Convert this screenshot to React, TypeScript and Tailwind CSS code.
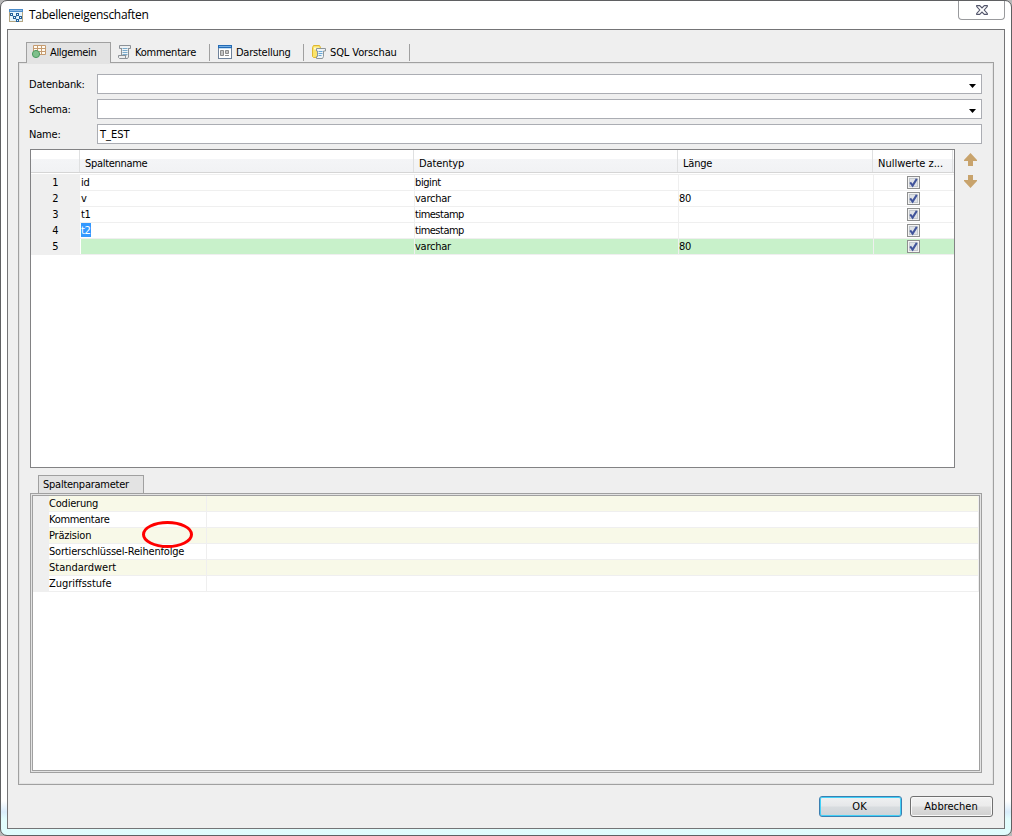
import React from "react";

function Check() {
  return (
    <svg width="13" height="13" viewBox="0 0 13 13" className="block">
      <rect x="0.5" y="0.5" width="12" height="12" fill="#f4f4f4" stroke="#8e8f8f" />
      <rect x="2.5" y="2.5" width="8" height="8" fill="#dfe2e6" stroke="#c3c8ce" />
      <path d="M3.2 6.3 5.6 9.6 9.8 2.9" fill="none" stroke="#41549b" strokeWidth="2" />
    </svg>
  );
}

function AppIcon() {
  return (
    <svg width="14" height="13" viewBox="0 0 14 13" className="block">
      <rect x="0.5" y="0.5" width="13" height="12" fill="#e6f5fb" stroke="#b3a583" />
      <rect width="14" height="3" fill="#4a8ac8" />
      <path d="M1 1.5h12" stroke="#8fbce6" />
      <path d="M3 5.5 5.5 9.5 8.5 6M6 9.5 9 11 12 8.5" stroke="#7da9cf" fill="none" />
      <path d="M1 4h3v3H1zM7 4h3v3H7zM4 7h3v3H4zM7 10h3v3H7zM10 7h3v3h-3z" fill="#235f98" />
      <path d="M2 5h1v1H2zM8 5h1v1H8zM5 8h1v1H5zM8 11h1v1H8zM11 8h1v1h-1z" fill="#e6f7ff" />
    </svg>
  );
}

function GridIcon() {
  return (
    <svg width="14" height="14" viewBox="0 0 14 14" className="block">
      <path d="M1.5.5h12v9h-12zM5.5.5v9M9.5.5v9M1.5 3.5h12M1.5 6.5h12" fill="#fffaf0" stroke="#c59b70" />
      <circle cx="4" cy="9" r="3.6" fill="#7fc08b" stroke="#4b9b62" />
    </svg>
  );
}

function ScrollIcon() {
  return (
    <svg width="14" height="14" viewBox="0 0 14 14" className="block">
      <path d="M3.5 3.5h-2v-3h11v3h-2v7h-7z" fill="#eceeef" stroke="#8c9196" />
      <path d="M3.5 3v8M10.5 3v9l-1 1.5h-8l-1-1v-2h7v3" fill="#eceeef" stroke="#8c9196" />
      <path d="M4 2h6v8H4z" fill="#eef3f6" />
      <path d="M4.5 3.5h5M4.5 5.5h5M4.5 7.5h5M4.5 9.5h5" stroke="#79aacb" />
    </svg>
  );
}

function WindowIcon() {
  return (
    <svg width="14" height="14" viewBox="0 0 14 14" className="block">
      <rect x="0.5" y="0.5" width="13" height="13" fill="#fff" stroke="#70839b" />
      <rect width="14" height="3" fill="#246bb5" />
      <path d="M1 1.5h12" stroke="#76b0e5" />
      <path d="M1 3.5h12" stroke="#c5def2" />
      <path d="M2.5 5.5h3v5h-3zM7.5 5.5h3v3h-3z" fill="#c5c5c5" stroke="#8b8b8b" />
      <path d="M7 10.5h4" stroke="#8b8b8b" />
    </svg>
  );
}

function SqlIcon() {
  return (
    <svg width="14" height="14" viewBox="0 0 14 14" className="block">
      <path d="M.5 2.5 1.5.5h6l1 2v10h-7l-1-1z" fill="#fae36b" stroke="#dfb72f" />
      <path d="M2 3.5h5" stroke="#fffbd0" strokeWidth="2" />
      <path d="M4.5 3.5h9v2.5h-2v5.5l-1 2h-6v-2h1v-5.5h-1z" fill="#edf3f7" stroke="#8e9699" />
      <path d="M6.5 6.5h4M6.5 8.5h4M6.5 10.5h3" stroke="#69a7d5" />
    </svg>
  );
}

const tabs = [
  { label: "Kommentare", icon: <ScrollIcon />, box: "w-[99px] pl-[7px]", text: "ml-[3px] tracking-[-0.25px]" },
  { label: "Darstellung", icon: <WindowIcon />, box: "w-[94px] pl-[8px]", text: "ml-[4px] tracking-[-0.25px]" },
  { label: "SQL Vorschau", icon: <SqlIcon />, box: "w-[106px] pl-[8px]", text: "ml-[4px] tracking-[-0.1px]" },
];

const columns = [
  { name: "id", type: "bigint", length: "", spacing: "tracking-[-0.4px]" },
  { name: "v", type: "varchar", length: "80", spacing: "tracking-[-0.25px]" },
  { name: "t1", type: "timestamp", length: "", spacing: "tracking-[-0.5px]" },
  { name: "t2", type: "timestamp", length: "", spacing: "tracking-[-0.5px]" },
  { name: "", type: "varchar", length: "80", spacing: "tracking-[-0.25px]" },
];

const params = [
  { label: "Codierung", spacing: "tracking-[-0.2px]" },
  { label: "Kommentare", spacing: "tracking-[-0.3px]" },
  { label: "Präzision", spacing: "tracking-[-0.2px]" },
  { label: "Sortierschlüssel-Reihenfolge", spacing: "tracking-[-0.18px]" },
  { label: "Standardwert", spacing: "tracking-normal" },
  { label: "Zugriffsstufe", spacing: "tracking-[-0.05px]" },
];

function Field({ label, value, combo }: { label: string; value?: string; combo?: boolean }) {
  return (
    <div className="flex h-[20px]">
      <label className="w-[68px] pt-[3px] tracking-[-0.2px]">{label}</label>
      <div className="flex flex-1 justify-between border border-[#abadb3] bg-white pl-[2px]">
        <span className="pt-[2px]">{value}</span>
        {combo && (
          <svg width="7" height="4" viewBox="0 0 7 4" className="mt-[9px] mr-[5px]">
            <path d="M0 0h7L3.5 4z" fill="#000" />
          </svg>
        )}
      </div>
    </div>
  );
}

function HeadCell({ text, className }: { text: string; className: string }) {
  return (
    <div className={`h-full border-r border-[#dfe0e1] pt-[6px] ${className}`}>{text}</div>
  );
}

export default function App() {
  return (
    <div className="h-[836px] w-[1012px] bg-[#b8b8b8] font-['DejaVu_Sans_Condensed','Noto_Sans',sans-serif] text-[11px] leading-[16px] whitespace-nowrap text-black">
      <div className="flex h-full flex-col rounded-[7px] border border-[#5f6062] bg-[linear-gradient(to_bottom,#fff_0,#fff_800px,#d9ecfb_811px,#e2fdfd_818px,#dffcfc_100%)] px-[6px] pb-[6px]">
        <header className="flex h-[28px] items-start justify-between">
          <div className="flex pl-[2px]">
            <div className="pt-[8px]"><AppIcon /></div>
            <h1 className="ml-[6px] pt-[6px] font-['Open_Sans','Noto_Sans',sans-serif] text-[12px] tracking-[-0.3px]">Tabelleneigenschaften</h1>
          </div>
          <button className="flex h-[19px] w-[47px] justify-center rounded-b-[4px] border border-t-0 border-[#999a9d] bg-white pt-[4px]">
            <svg width="12" height="10" viewBox="0 0 12 10">
              <path d="M.7.6h3L6 3 8.3.6h3v1L8.2 5l3.1 3.4v1h-3L6 7 3.7 9.4h-3v-1L3.8 5 .7 1.6z" fill="#fff" stroke="#53566b" strokeWidth="1.1" />
            </svg>
          </button>
        </header>

        <main className="flex flex-1 flex-col border border-[#747476] bg-[#efefef] px-[10px] pt-[12px] pb-[11px]">
          <nav className="z-10 flex h-[21px] pl-[8px]">
            <div className="flex h-[21px] w-[85px] border border-b-0 border-[#a0a0a0] bg-[#e3e3e3] pl-[5px]">
              <div className="pt-[2px]"><GridIcon /></div>
              <span className="ml-[4px] pt-[2px] tracking-[-0.33px]">Allgemein</span>
            </div>
            {tabs.map((t) => (
              <div key={t.label} className={`mt-[2px] flex h-[17px] border-r border-[#a0a0a0] ${t.box}`}>
                <div className="pt-[1px]">{t.icon}</div>
                <span className={`pt-[1px] ${t.text}`}>{t.label}</span>
              </div>
            ))}
          </nav>

          <section className="-mt-px h-[723px] border border-[#a0a0a0] px-[11px] pt-[11px] shadow-[inset_0_0_0_1px_#e3e3e3]">
            <div className="-ml-px flex flex-col gap-[5px]">
              <Field label="Datenbank:" combo />
              <Field label="Schema:" combo />
              <Field label="Name:" value="T_EST" />
            </div>

            <div className="mt-[5px] flex">
              <div className="h-[319px] w-[925px] border border-[#828284] bg-white">
                <div className="flex h-[23px] border-b border-[#d5d5d5] bg-[linear-gradient(#fff_0,#fff_9px,#f4f5f7_9px,#f1f2f4_100%)]">
                  <HeadCell text="" className="w-[49px]" />
                  <HeadCell text="Spaltenname" className="w-[334px] pl-[5px] tracking-[-0.3px]" />
                  <HeadCell text="Datentyp" className="w-[264px] pl-[5px] tracking-[-0.1px]" />
                  <HeadCell text="Länge" className="w-[195px] pl-[5px] tracking-[-0.2px]" />
                  <HeadCell text="Nullwerte z..." className="w-[80px] pl-[5px]" />
                </div>
                <div className="mt-[1px] border-t border-[#efefef]">
                  {columns.map((c, i) => (
                    <div key={i} className={`flex h-[16px] w-[923px] border-b border-[#efefef] leading-[15px] ${i === 4 ? "bg-[#c8f1ca]" : "bg-white"}`}>
                      <div className="w-[50px] border-r border-white bg-[#efefef] text-center">{i + 1}</div>
                      <div className="w-[334px] border-r border-[#efefef] tracking-[-0.3px]">
                        <span className={i === 3 ? "inline-block h-[14px] w-[10px] bg-[#3399ff] text-white" : ""}>{c.name}</span>
                      </div>
                      <div className={`w-[264px] border-r border-[#efefef] ${c.spacing}`}>{c.type}</div>
                      <div className="w-[195px] border-r border-[#efefef] tracking-[-0.3px]">{c.length}</div>
                      <div className="flex-1 pt-[1px] pl-[33px]"><Check /></div>
                    </div>
                  ))}
                </div>
              </div>
              <div className="flex flex-col gap-[9px] pt-[4px] pl-[9px]">
                <svg width="13" height="13" viewBox="0 0 13 13"><path d="M6.5 0 13 7v1H9v5H4V8H0V7z" fill="#c8a36c" /></svg>
                <svg width="13" height="13" viewBox="0 0 13 13"><path d="M4 0h5v5h4v1l-6.5 7L0 6V5h4z" fill="#c8a36c" /></svg>
              </div>
            </div>

            <div className="mt-[7px] ml-[8px] h-[19px] w-[106px] border border-b-0 border-[#a0a0a0] bg-[#e3e3e3] pt-[1px] pl-[4px] tracking-[-0.25px]">Spaltenparameter</div>
            <div className="-mt-px h-[280px] w-[952px] border border-[#a0a0a0] bg-[#e3e3e3] p-[1px]">
              <div className="relative h-full border border-[#a0a0a0] bg-white">
                {params.map((p, i) => (
                  <div key={p.label} className="flex h-[16px] leading-[15px]">
                    <div className="w-[16px] bg-[#efefef]" />
                    <div className={`w-[158px] border-r border-b border-[#efefef] ${p.spacing} ${i % 2 ? "bg-white" : "bg-[#f8f9e8]"}`}>{p.label}</div>
                    <div className={`flex-1 border-r border-b border-[#efefef] ${i % 2 ? "bg-white" : "bg-[#f8f9e8]"}`} />
                  </div>
                ))}
                <svg className="absolute top-[24px] left-[108px]" width="54" height="30" viewBox="0 0 54 30">
                  <ellipse cx="26.5" cy="14.5" rx="24" ry="12" fill="none" stroke="#ff0000" strokeWidth="3" />
                </svg>
              </div>
            </div>
          </section>

          <footer className="mt-[11px] flex justify-end gap-[8px] pr-px">
            <button className="h-[21px] w-[83px] rounded-[3px] border border-[#3c7fb1] bg-[linear-gradient(#f0f1f2_0,#e5e7e9_48%,#d8dcdf_52%,#cdd3d8_100%)] pr-[2px] shadow-[inset_0_0_0_1px_#42d0f7]">OK</button>
            <button className="h-[21px] w-[83px] rounded-[3px] border border-[#707070] bg-[linear-gradient(#f2f2f2_0,#ebebeb_48%,#dddddd_52%,#cfcfcf_100%)] pr-[1px] shadow-[inset_0_0_0_1px_#f8f8f8]">Abbrechen</button>
          </footer>
        </main>
      </div>
    </div>
  );
}
